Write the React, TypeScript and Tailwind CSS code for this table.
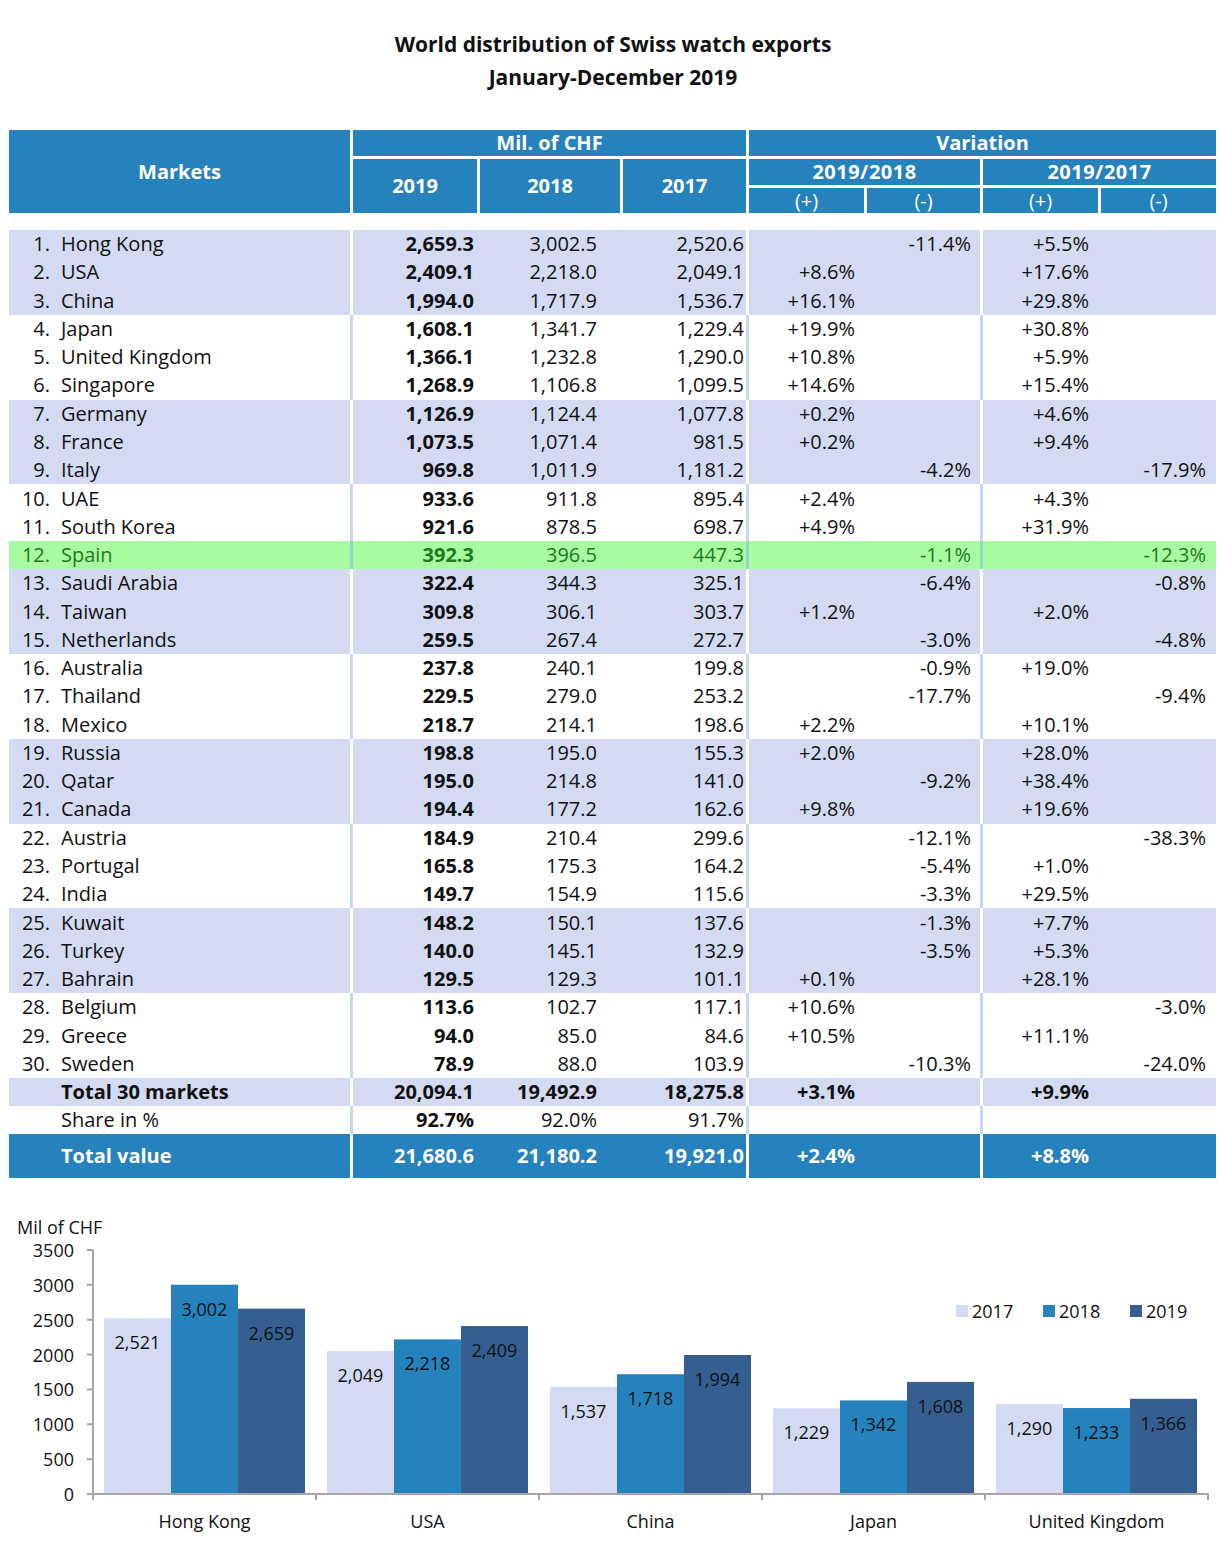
import React from "react";

type Row = [string, string, string, string, string, string, string, string];

const rows: Row[] = [
  ["Hong Kong", "2,659.3", "3,002.5", "2,520.6", "", "-11.4%", "+5.5%", ""],
  ["USA", "2,409.1", "2,218.0", "2,049.1", "+8.6%", "", "+17.6%", ""],
  ["China", "1,994.0", "1,717.9", "1,536.7", "+16.1%", "", "+29.8%", ""],
  ["Japan", "1,608.1", "1,341.7", "1,229.4", "+19.9%", "", "+30.8%", ""],
  ["United Kingdom", "1,366.1", "1,232.8", "1,290.0", "+10.8%", "", "+5.9%", ""],
  ["Singapore", "1,268.9", "1,106.8", "1,099.5", "+14.6%", "", "+15.4%", ""],
  ["Germany", "1,126.9", "1,124.4", "1,077.8", "+0.2%", "", "+4.6%", ""],
  ["France", "1,073.5", "1,071.4", "981.5", "+0.2%", "", "+9.4%", ""],
  ["Italy", "969.8", "1,011.9", "1,181.2", "", "-4.2%", "", "-17.9%"],
  ["UAE", "933.6", "911.8", "895.4", "+2.4%", "", "+4.3%", ""],
  ["South Korea", "921.6", "878.5", "698.7", "+4.9%", "", "+31.9%", ""],
  ["Spain", "392.3", "396.5", "447.3", "", "-1.1%", "", "-12.3%"],
  ["Saudi Arabia", "322.4", "344.3", "325.1", "", "-6.4%", "", "-0.8%"],
  ["Taiwan", "309.8", "306.1", "303.7", "+1.2%", "", "+2.0%", ""],
  ["Netherlands", "259.5", "267.4", "272.7", "", "-3.0%", "", "-4.8%"],
  ["Australia", "237.8", "240.1", "199.8", "", "-0.9%", "+19.0%", ""],
  ["Thailand", "229.5", "279.0", "253.2", "", "-17.7%", "", "-9.4%"],
  ["Mexico", "218.7", "214.1", "198.6", "+2.2%", "", "+10.1%", ""],
  ["Russia", "198.8", "195.0", "155.3", "+2.0%", "", "+28.0%", ""],
  ["Qatar", "195.0", "214.8", "141.0", "", "-9.2%", "+38.4%", ""],
  ["Canada", "194.4", "177.2", "162.6", "+9.8%", "", "+19.6%", ""],
  ["Austria", "184.9", "210.4", "299.6", "", "-12.1%", "", "-38.3%"],
  ["Portugal", "165.8", "175.3", "164.2", "", "-5.4%", "+1.0%", ""],
  ["India", "149.7", "154.9", "115.6", "", "-3.3%", "+29.5%", ""],
  ["Kuwait", "148.2", "150.1", "137.6", "", "-1.3%", "+7.7%", ""],
  ["Turkey", "140.0", "145.1", "132.9", "", "-3.5%", "+5.3%", ""],
  ["Bahrain", "129.5", "129.3", "101.1", "+0.1%", "", "+28.1%", ""],
  ["Belgium", "113.6", "102.7", "117.1", "+10.6%", "", "", "-3.0%"],
  ["Greece", "94.0", "85.0", "84.6", "+10.5%", "", "+11.1%", ""],
  ["Sweden", "78.9", "88.0", "103.9", "", "-10.3%", "", "-24.0%"],
];

type Variant = "lav" | "white" | "green" | "blue";

const rowStyles: Record<Variant, { sep: string; cell: string; text: string }> = {
  lav: { sep: "bg-white", cell: "bg-[#d3daf1]", text: "text-[#111]" },
  white: { sep: "bg-[#c5d8f0]", cell: "bg-white", text: "text-[#111]" },
  green: { sep: "bg-[#98d4c4]", cell: "bg-[#a9fba1]", text: "text-[#1d7a1d]" },
  blue: { sep: "bg-white", cell: "bg-[#2582bd]", text: "text-white" },
};

function BodyRow({
  variant,
  rank,
  name,
  vals,
  height,
  boldAll,
  nameBold,
}: {
  variant: Variant;
  rank?: string;
  name: string;
  vals: string[];
  height: string;
  boldAll?: boolean;
  nameBold?: boolean;
}) {
  const s = rowStyles[variant];
  return (
    <div className={`flex gap-[3px] ${s.sep} ${s.text} ${height}`}>
      <div className={`w-[341px] flex items-center ${s.cell}`}>
        <span className="w-[41px] text-right">{rank ?? ""}</span>
        <span className={`pl-[11px] ${nameBold ? "font-bold" : ""}`}>{name}</span>
      </div>
      <div className={`w-[393px] flex items-center ${s.cell}`}>
        <span className="w-[121px] text-right font-bold">{vals[0]}</span>
        <span className={`w-[123px] text-right ${boldAll ? "font-bold" : ""}`}>{vals[1]}</span>
        <span className={`w-[147px] text-right ${boldAll ? "font-bold" : ""}`}>{vals[2]}</span>
      </div>
      <div className={`w-[231px] flex items-center ${s.cell}`}>
        <span className={`w-[106px] text-right ${boldAll ? "font-bold" : ""}`}>{vals[3]}</span>
        <span className={`w-[116px] text-right ${boldAll ? "font-bold" : ""}`}>{vals[4]}</span>
      </div>
      <div className={`w-[233px] flex items-center ${s.cell}`}>
        <span className={`w-[106px] text-right ${boldAll ? "font-bold" : ""}`}>{vals[5]}</span>
        <span className={`w-[117px] text-right ${boldAll ? "font-bold" : ""}`}>{vals[6]}</span>
      </div>
    </div>
  );
}

const H = "bg-[#2582bd] text-white flex items-center justify-center";

const chartData = [
  { name: "Hong Kong", v: [2521, 3002, 2659] },
  { name: "USA", v: [2049, 2218, 2409] },
  { name: "China", v: [1537, 1718, 1994] },
  { name: "Japan", v: [1229, 1342, 1608] },
  { name: "United Kingdom", v: [1290, 1233, 1366] },
];
const barColors = ["#d3daf1", "#2582bd", "#365f91"];

function Chart() {
  const y0 = 1494;
  const k = 244 / 3500;
  const font = "'Open Sans', sans-serif";
  const fmt = (n: number) => n.toLocaleString("en-US");
  return (
    <svg width="1218" height="379" viewBox="0 1178 1218 379" className="block">
      <text x="17" y="1227" fontFamily={font} fontSize="18" dominantBaseline="central" fill="#111">
        Mil of CHF
      </text>
      {[0, 500, 1000, 1500, 2000, 2500, 3000, 3500].map((t) => {
        const y = y0 - t * k;
        return (
          <g key={t}>
            <line x1="87" x2="93" y1={y} y2={y} stroke="#a6a6a6" strokeWidth="2" />
            <text
              x="74"
              y={y}
              textAnchor="end"
              fontFamily={font}
              fontSize="18"
              dominantBaseline="central"
              fill="#111"
            >
              {t}
            </text>
          </g>
        );
      })}
      {chartData.map((c, i) => {
        const gx = 93 + 223 * i;
        return (
          <g key={c.name}>
            {c.v.map((v, j) => {
              const x = gx + 11 + 67 * j;
              const h = v * k;
              return (
                <g key={j}>
                  <rect x={x} y={y0 - h} width="67" height={h} fill={barColors[j]} />
                  <text
                    x={x + 33.5}
                    y={y0 - h + 24}
                    textAnchor="middle"
                    fontFamily={font}
                    fontSize="18"
                    dominantBaseline="central"
                    fill="#111"
                  >
                    {fmt(v)}
                  </text>
                </g>
              );
            })}
            <text
              x={gx + 111.5}
              y="1521"
              textAnchor="middle"
              fontFamily={font}
              fontSize="18"
              dominantBaseline="central"
              fill="#111"
            >
              {c.name}
            </text>
          </g>
        );
      })}
      <line x1="93" x2="93" y1="1250" y2={y0 + 1} stroke="#a6a6a6" strokeWidth="2" />
      <line x1="92" x2="1209" y1={y0} y2={y0} stroke="#a6a6a6" strokeWidth="2" />
      {[0, 1, 2, 3, 4, 5].map((i) => (
        <line key={i} x1={93 + 223 * i} x2={93 + 223 * i} y1={y0} y2={y0 + 6} stroke="#a6a6a6" strokeWidth="2" />
      ))}
      {["2017", "2018", "2019"].map((l, i) => (
        <g key={l}>
          <rect x={956 + 87 * i} y="1305" width="12" height="12" fill={barColors[i]} />
          <text x={972 + 87 * i} y="1311" fontFamily={font} fontSize="18" dominantBaseline="central" fill="#111">
            {l}
          </text>
        </g>
      ))}
    </svg>
  );
}

export default function App() {
  return (
    <div className="w-[1218px] h-[1557px] bg-white font-['Open_Sans',sans-serif] text-[20px] text-[#111] overflow-hidden">
      <div className="pt-[28px] text-center font-bold text-[21px] leading-[33px] pl-[8px]">
        <div>World distribution of Swiss watch exports</div>
        <div>January-December 2019</div>
      </div>
      <div className="pl-[9px] mt-[36px]">
        <div className="grid grid-cols-[341px_124px_140px_123px_115px_113px_115px_115px] grid-rows-[26px_26px_25px] gap-[3px] w-[1207px]">
          <div className={`${H} row-span-3 font-bold`}>Markets</div>
          <div className={`${H} col-span-3 font-bold`}>Mil. of CHF</div>
          <div className={`${H} col-span-4 font-bold`}>Variation</div>
          <div className={`${H} row-span-2 font-bold`}>2019</div>
          <div className={`${H} row-span-2 font-bold`}>2018</div>
          <div className={`${H} row-span-2 font-bold`}>2017</div>
          <div className={`${H} col-span-2 font-bold tracking-[0.5px]`}>2019/2018</div>
          <div className={`${H} col-span-2 font-bold tracking-[0.5px]`}>2019/2017</div>
          <div className={H}>(+)</div>
          <div className={H}>(-)</div>
          <div className={H}>(+)</div>
          <div className={H}>(-)</div>
        </div>
        <div className="mt-[17px] w-[1207px]">
          {rows.map((r, i) => {
            const band = Math.floor(i / 3) % 2 === 0 ? "lav" : "white";
            const variant: Variant = r[0] === "Spain" ? "green" : band;
            return (
              <BodyRow
                key={r[0]}
                variant={variant}
                rank={`${i + 1}.`}
                name={r[0]}
                vals={r.slice(1)}
                height="h-[28.27px]"
              />
            );
          })}
          <BodyRow
            variant="lav"
            name="Total 30 markets"
            nameBold
            boldAll
            vals={["20,094.1", "19,492.9", "18,275.8", "+3.1%", "", "+9.9%", ""]}
            height="h-[28px]"
          />
          <BodyRow
            variant="white"
            name="Share in %"
            vals={["92.7%", "92.0%", "91.7%", "", "", "", ""]}
            height="h-[28px]"
          />
          <BodyRow
            variant="blue"
            name="Total value"
            nameBold
            boldAll
            vals={["21,680.6", "21,180.2", "19,921.0", "+2.4%", "", "+8.8%", ""]}
            height="h-[44px]"
          />
        </div>
      </div>
      <Chart />
    </div>
  );
}
